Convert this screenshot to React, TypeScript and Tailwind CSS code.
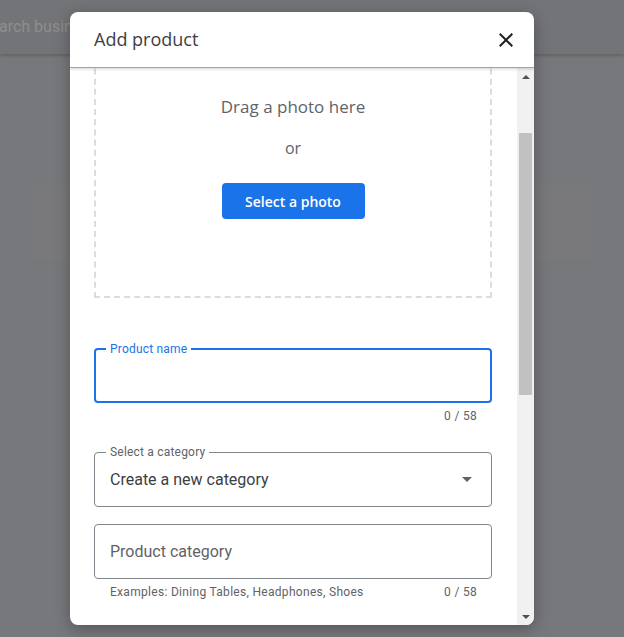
import React from "react";

const roboto = { fontFamily: "Roboto, 'Noto Sans', Arial, sans-serif" };
const heading = { fontFamily: "'Open Sans', Roboto, Arial, sans-serif" };

function OutlinedField({
  label,
  focused,
  children,
}: {
  label?: string;
  focused?: boolean;
  children?: React.ReactNode;
}) {
  return (
    <div
      className={
        "relative flex h-[55px] items-center rounded-[4px] " +
        (focused ? "border-2 border-[#1a73e8] pl-[14px] pr-4" : "border border-[#80868b] pl-[15px] pr-4")
      }
    >
      {label ? (
        <span
          className={
            "absolute -top-[9px] bg-white px-1 text-[12px] leading-4 tracking-[0.2px] " +
            (focused ? "left-[10px] text-[#1a73e8]" : "left-[11px] text-[#5f6368]")
          }
        >
          {label}
        </span>
      ) : null}
      {children}
    </div>
  );
}

function Helper({ text, count }: { text?: string; count: string }) {
  return (
    <div className="flex h-4 items-center justify-between pl-4 pr-[15px] text-[12px] leading-4 tracking-[0.3px] text-[#5f6368]">
      <span>{text}</span>
      <span>{count}</span>
    </div>
  );
}

function Scrollbar() {
  return (
    <div className="flex w-[17px] shrink-0 flex-col bg-[#f1f1f1]">
      <div className="flex h-[17px] items-center justify-center">
        <div className="h-0 w-0 border-x-[4px] border-b-[4px] border-x-transparent border-b-[#505050]" />
      </div>
      <div className="h-[48px]" />
      <div className="mx-[2px] h-[262px] bg-[#c1c1c1]" />
      <div className="flex-1" />
      <div className="flex h-[17px] items-center justify-center">
        <div className="h-0 w-0 border-x-[4px] border-t-[4px] border-x-transparent border-t-[#505050]" />
      </div>
    </div>
  );
}

export default function App() {
  return (
    <div className="relative h-[637px] w-[624px] overflow-hidden bg-[#77787b]" style={roboto}>
      {/* page behind the scrim */}
      <div className="flex h-[54px] items-center bg-[#737477] shadow-[0_2px_3px_rgba(0,0,0,0.18)]">
        <span className="-ml-[19px] text-[16px] text-[#8d8e90]">Search businesses</span>
      </div>
      <div className="mt-[132px] flex h-[74px] gap-4 px-[30px]">
        <div className="w-[150px] bg-[#79797c]" />
        <div className="flex-1" />
        <div className="w-[90px] bg-[#79797c]" />
      </div>

      {/* dialog */}
      <div className="absolute left-[70px] top-[12px] flex h-[613px] w-[464px] flex-col overflow-hidden rounded-[8px] bg-white shadow-[0_4px_16px_rgba(0,0,0,0.3)]">
        <div className="relative z-10 flex h-[56px] shrink-0 items-center justify-between border-b border-[#a0a3a8] pl-6 pr-4 shadow-[0_1px_3px_rgba(0,0,0,0.18)]">
          <span className="text-[18px] text-[#3c4043]" style={heading}>
            Add product
          </span>
          <svg width="24" height="24" viewBox="0 0 24 24" fill="#202124">
            <path d="M19 6.41L17.59 5 12 10.59 6.41 5 5 6.41 10.59 12 5 17.59 6.41 19 12 13.41 17.59 19 19 17.59 13.41 12z" />
          </svg>
        </div>

        <div className="flex min-h-0 flex-1">
          <div className="min-w-0 flex-1 overflow-hidden">
            <div className="-mt-[30px] pl-6 pr-[25px]">
              <div className="flex h-[260px] flex-col items-center border-2 border-dashed border-[#dadce0] pt-[55px]">
                <span className="text-[17px] leading-6 text-[#5f6368]" style={heading}>
                  Drag a photo here
                </span>
                <span className="mt-[17px] text-[16px] leading-6 text-[#5f6368]" style={heading}>
                  or
                </span>
                <button
                  className="mt-[23px] h-[36px] w-[143px] rounded-[4px] bg-[#1a73e8] text-[14px] font-semibold text-white"
                  style={heading}
                >
                  Select a photo
                </button>
              </div>

              <div className="mt-[50px]">
                <OutlinedField label="Product name" focused />
              </div>
              <div className="mt-[5px]">
                <Helper count="0 / 58" />
              </div>

              <div className="mt-[28px]">
                <OutlinedField label="Select a category">
                  <span className="flex-1 text-[16px] text-[#3c4043]">Create a new category</span>
                  <div className="mr-[3px] h-0 w-0 border-x-[5px] border-t-[5px] border-x-transparent border-t-[#5f6368]" />
                </OutlinedField>
              </div>

              <div className="mt-[17px]">
                <OutlinedField>
                  <span className="text-[16px] text-[#5f6368]">Product category</span>
                </OutlinedField>
              </div>
              <div className="mt-[5px]">
                <Helper text="Examples: Dining Tables, Headphones, Shoes" count="0 / 58" />
              </div>
              <div className="h-[40px]" />
            </div>
          </div>
          <Scrollbar />
        </div>
      </div>
    </div>
  );
}
